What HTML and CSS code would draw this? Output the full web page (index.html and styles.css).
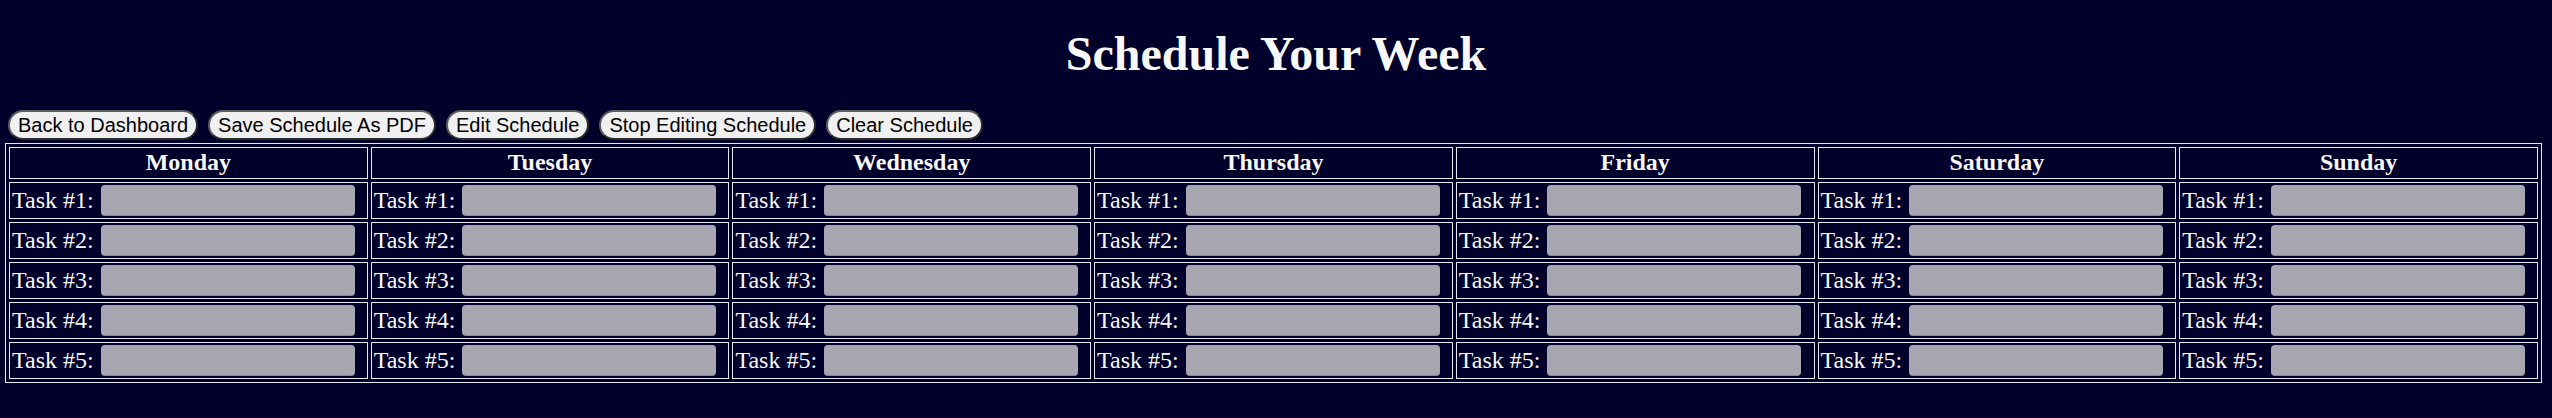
FILE: index.html
```html
<!DOCTYPE html>
<html lang="en">
<head>
<meta charset="utf-8">
<title>Schedule Your Week</title>
<link rel="stylesheet" href="styles.css">
</head>
<body>
<h1 class="title">Schedule Your Week</h1>
<div class="toolbar">
  <button class="btn">Back to Dashboard</button>
  <button class="btn">Save Schedule As PDF</button>
  <button class="btn">Edit Schedule</button>
  <button class="btn">Stop Editing Schedule</button>
  <button class="btn">Clear Schedule</button>
</div>
<table class="week">
  <thead>
    <tr>
      <th>Monday</th><th>Tuesday</th><th>Wednesday</th><th>Thursday</th><th>Friday</th><th>Saturday</th><th>Sunday</th>
    </tr>
  </thead>
  <tbody id="rows"></tbody>
</table>
<script src="app.js"></script>
</body>
</html>
```
FILE: app.js
```js
const tbody = document.getElementById('rows');
for (let t = 1; t <= 5; t++) {
  const tr = document.createElement('tr');
  for (let d = 0; d < 7; d++) {
    const td = document.createElement('td');
    const lab = document.createElement('label');
    lab.className = 'task';
    const span = document.createElement('span');
    span.textContent = 'Task #' + t + ':';
    const inp = document.createElement('input');
    inp.type = 'text';
    inp.className = 'task-input';
    lab.appendChild(span);
    lab.appendChild(inp);
    td.appendChild(lab);
    tr.appendChild(td);
  }
  tbody.appendChild(tr);
}
```
FILE: styles.css
```css
html, body {
  background: #00002a;
}
body {
  margin: 0 5px;
  color: #f8f8f8;
  font-family: "Liberation Serif", "Times New Roman", serif;
}
.title {
  margin: 0;
  padding: 26px 0 29px;
  text-align: center;
  font-size: 48px;
  font-weight: bold;
  line-height: 55px;
  color: #f8f8f8;
}
.toolbar {
  display: flex;
  gap: 10px;
  padding: 0 3px;
  margin-bottom: 3px;
}
.btn {
  height: 30px;
  padding: 0 8px;
  border: 2px solid;
  border-color: #5e5e5e #2c2c2c #2c2c2c #5e5e5e;
  border-radius: 15px;
  background: #f0f0f0;
  color: #000;
  font-family: "Liberation Sans", Arial, sans-serif;
  font-size: 20px;
  line-height: 24px;
}
.week {
  width: calc(100% - 5px);
  table-layout: fixed;
  border: 1px solid #e8e8f0;
  border-spacing: 3px;
}
.week th,
.week td {
  border: 1px solid #e8e8f0;
  padding: 1px;
}
.week th {
  font-size: 24px;
  font-weight: bold;
  line-height: 27.5px;
  text-align: center;
}
.task {
  display: flex;
  align-items: center;
  gap: 7px;
  height: 33px;
  padding-left: 1px;
  font-size: 24px;
  white-space: nowrap;
}
.task-input {
  width: 254px;
  height: 31px;
  box-sizing: border-box;
  margin: 0;
  border: none;
  border-bottom: 1px solid #8a8996;
  border-radius: 4px;
  background: #a7a6b1;
}
```
